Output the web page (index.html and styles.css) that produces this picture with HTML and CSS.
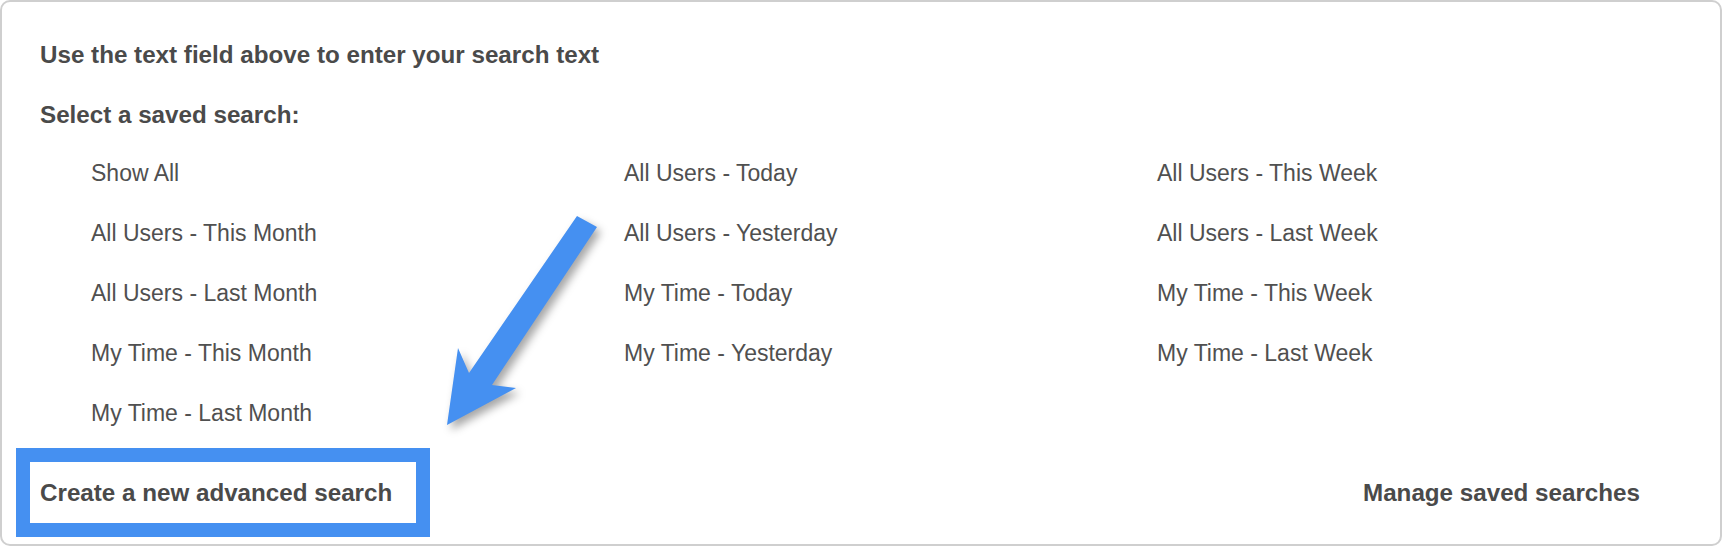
FILE: index.html
```html
<!DOCTYPE html>
<html lang="en">
<head>
<meta charset="utf-8">
<title>Saved searches</title>
<link rel="stylesheet" href="styles.css">
</head>
<body>
<div class="panel">
  <p class="heading">Use the text field above to enter your search text</p>
  <p class="heading">Select a saved search:</p>
  <ul class="searches">
    <li>Show All</li>
    <li>All Users - Today</li>
    <li>All Users - This Week</li>
    <li>All Users - This Month</li>
    <li>All Users - Yesterday</li>
    <li>All Users - Last Week</li>
    <li>All Users - Last Month</li>
    <li>My Time - Today</li>
    <li>My Time - This Week</li>
    <li>My Time - This Month</li>
    <li>My Time - Yesterday</li>
    <li>My Time - Last Week</li>
    <li>My Time - Last Month</li>
  </ul>
  <div class="actions">
    <a class="action highlight">Create a new advanced search</a>
    <a class="action manage">Manage saved searches</a>
  </div>
  <svg class="arrow" width="1722" height="546" viewBox="0 0 1722 546" aria-hidden="true">
    <polygon points="577,216 597,227 492,385 516,388 447,425 458,348 469,373" />
  </svg>
</div>
</body>
</html>
```
FILE: styles.css
```css
html, body {
  margin: 0;
  padding: 0;
  background: #ffffff;
}

.panel {
  position: relative;
  box-sizing: border-box;
  width: 1722px;
  height: 546px;
  border: 2px solid #cfcfcf;
  border-radius: 10px;
  padding: 23px 0 0 38px;
  font-family: "Liberation Sans", Arial, Helvetica, sans-serif;
  color: #4a4a4a;
  overflow: hidden;
}

.heading {
  margin: 0;
  font-size: 24.2px;
  font-weight: bold;
  line-height: 60px;
}

.searches {
  list-style: none;
  margin: -2px 0 0 0;
  padding: 0 0 0 51px;
  display: grid;
  grid-template-columns: repeat(3, 533px);
  grid-auto-rows: 60px;
  font-size: 23px;
  letter-spacing: 0;
  line-height: 60px;
  color: #505050;
}

.actions {
  display: flex;
  justify-content: space-between;
  align-items: center;
  margin: 5px 0 0 -24px;
  padding-right: 80px;
}

.action {
  font-size: 24.2px;
  font-weight: bold;
  line-height: 61px;
  color: #4a4a4a;
  white-space: nowrap;
}

.highlight {
  display: block;
  width: 376px;
  height: 61px;
  padding-left: 10px;
  border: 14px solid #4590f1;
}

.arrow {
  position: absolute;
  top: -2px;
  left: -2px;
  pointer-events: none;
  filter: drop-shadow(4px 5px 4px rgba(0, 0, 0, 0.35));
}

.arrow polygon {
  fill: #4590f1;
}
```
